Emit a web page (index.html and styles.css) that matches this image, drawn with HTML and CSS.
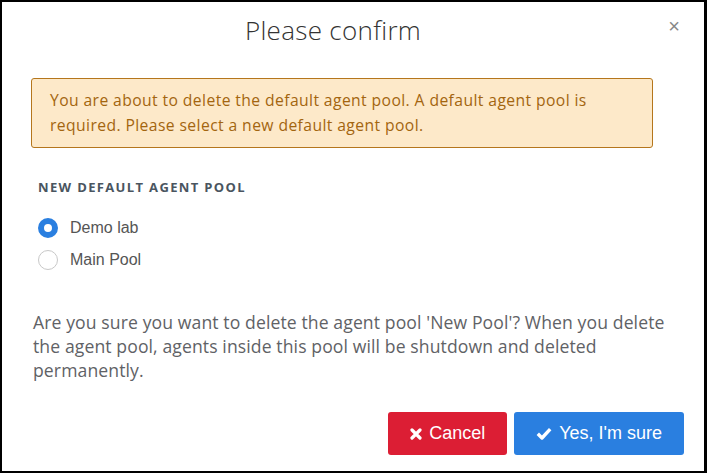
FILE: index.html
```html
<!DOCTYPE html>
<html lang="en">
<head>
  <meta charset="UTF-8">
  <title>Please confirm</title>
  <link rel="stylesheet" href="styles.css">
</head>
<body>

  <div class="modal">
    <div class="modal-header">
      <h4>Please confirm</h4>
      <button class="close">&times;</button>
    </div>

    <div class="modal-body">
      <div class="alert">
        You are about to delete the default agent pool. A default agent pool is<br>
        required. Please select a new default agent pool.
      </div>

      <div class="field-label">New default agent pool</div>
      <label class="radio">
        <span class="dot checked"></span>
        Demo lab
      </label>
      <label class="radio">
        <span class="dot"></span>
        Main Pool
      </label>

      <p class="question">
        Are you sure you want to delete the agent pool 'New Pool'? When you delete<br>
        the agent pool, agents inside this pool will be shutdown and deleted<br>
        permanently.
      </p>
    </div>

    <div class="modal-footer">
      <button class="btn btn-cancel">
        <svg width="12" height="12" viewBox="0 0 12 12"><path d="M2 2 L10 10 M10 2 L2 10" stroke="#fff" stroke-width="3.2" stroke-linecap="round"/></svg>
        Cancel
      </button>
      <button class="btn btn-ok">
        <svg width="16" height="13" viewBox="0 0 16 13"><path d="M1.8 6.8 L6 11 L14.2 2.2" fill="none" stroke="#fff" stroke-width="3.4" stroke-linejoin="round"/></svg>
        Yes, I'm sure
      </button>
    </div>
  </div>

</body>
</html>
```

FILE: styles.css
```css
body {
  margin: 0;
  background: #fff;
}
.modal {
  box-sizing: border-box;
  height: 100vh;
  border: 2px solid #000;
  border-right-width: 3px;
  display: flex;
  flex-direction: column;
  font-family: 'Open Sans', sans-serif;
}
.modal-header {
  height: 58px;
  padding-right: 40px;
  display: flex;
  align-items: center;
  justify-content: center;
  position: relative;
}
.modal-header h4 {
  margin: 0 0 2px;
  font-family: 'Open Sans', sans-serif;
  font-weight: 300;
  font-size: 26px;
  color: #333;
  letter-spacing: 0.3px;
}
.close {
  position: absolute;
  right: 24px;
  top: 13px;
  border: none;
  background: none;
  font-family: 'Liberation Sans', sans-serif;
  font-size: 20px;
  color: #888;
  padding: 0;
  cursor: pointer;
}
.modal-body {
  padding: 18px 20px 0 29px;
}
.alert {
  margin-right: 31px;
  padding: 9px 18px;
  background: #fde9c9;
  border: 1px solid #b5761c;
  border-radius: 3px;
  color: #a3650f;
  font-size: 15.7px;
  line-height: 25px;
  letter-spacing: 0.4px;
}
.field-label {
  margin-top: 31px;
  margin-left: 7px;
  font-size: 13px;
  line-height: 16px;
  font-weight: 700;
  text-transform: uppercase;
  letter-spacing: 1.35px;
  color: #4a5560;
}
.radio {
  display: flex;
  align-items: center;
  height: 32px;
  margin-left: 7px;
  font-family: 'Liberation Sans', sans-serif;
  font-size: 16px;
  color: #555;
}
.radio:first-of-type {
  margin-top: 17px;
}
.dot {
  box-sizing: border-box;
  width: 20px;
  height: 20px;
  border-radius: 50%;
  border: 1px solid #c8c8c8;
  margin-right: 12px;
}
.dot.checked {
  border: 6px solid #2a7fe0;
}
.question {
  margin: 34px 0 0 2px;
  font-size: 17.6px;
  line-height: 24px;
  letter-spacing: 0.1px;
  color: #5f6266;
}
.modal-footer {
  margin-top: auto;
  padding: 0 20px 16px 0;
  display: flex;
  justify-content: flex-end;
  gap: 7px;
}
.btn {
  height: 43px;
  padding: 0 22px;
  border: none;
  border-radius: 3px;
  color: #fff;
  font-family: 'Liberation Sans', sans-serif;
  font-size: 18px;
  display: flex;
  align-items: center;
  gap: 7px;
  cursor: pointer;
}
.btn-cancel { background: #dc1e34; }
.btn-ok { background: #2a7fe0; }
```
